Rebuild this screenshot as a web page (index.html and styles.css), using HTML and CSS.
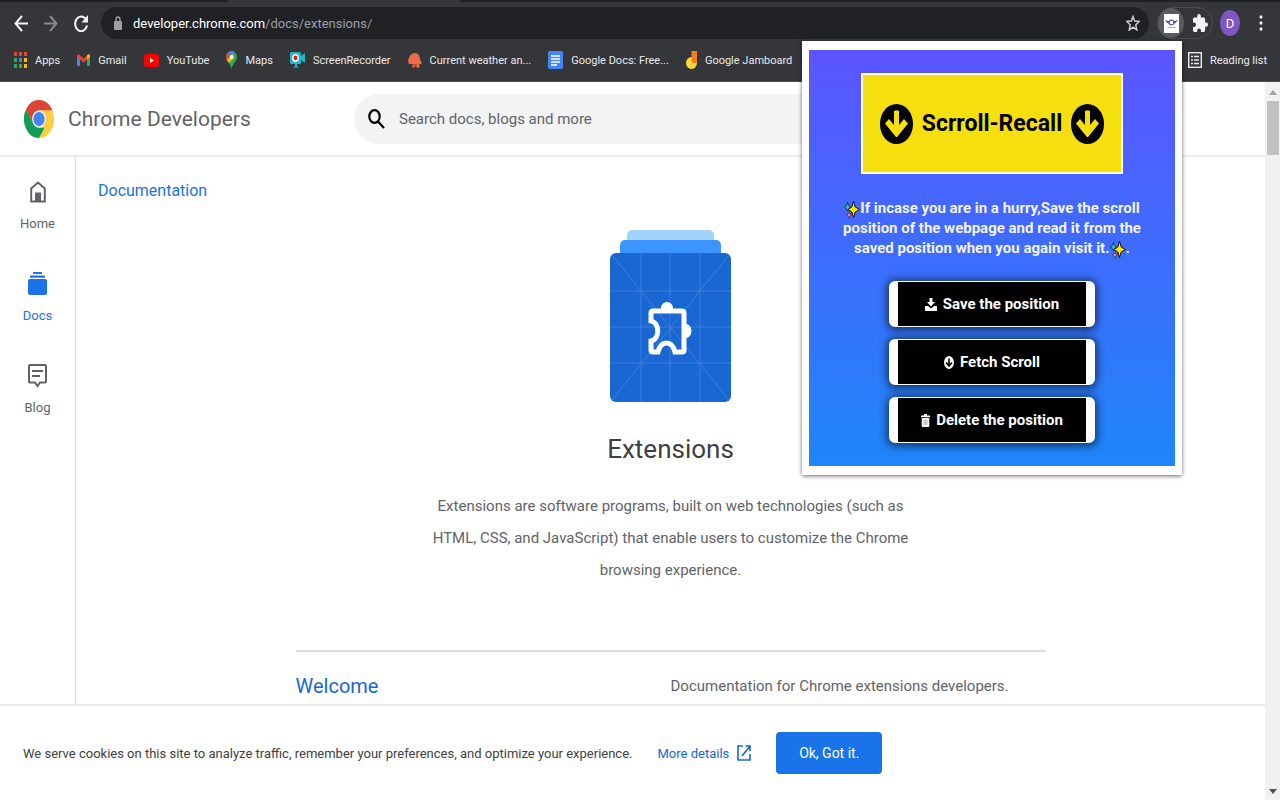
FILE: index.html
```html
<!DOCTYPE html>
<html lang="en">
  <head>
    <meta charset="UTF-8" />
    <meta name="viewport" content="width=device-width, initial-scale=1.0" />
    <title>Extensions - Chrome Developers</title>
    <link rel="stylesheet" href="styles.css">
  </head>
  <body>
    <!-- Browser bar -->
    <div class="browser">
      <div class="tab-strip"><div class="active-tab"></div></div>

      <div class="toolbar">
        <button class="nav-btn" aria-label="Back">
          <svg width="14" height="17" viewBox="0 0 14 17" fill="none" stroke="#f1f3f4" stroke-width="2"><path d="M14 8.500H1.500M8 1 1.500 8.500 8 16" /></svg>
        </button>
        <button class="nav-btn" aria-label="Forward">
          <svg width="14" height="17" viewBox="0 0 14 17" fill="none" stroke="#87898c" stroke-width="2"><path d="M0 8.500H12.500M6 1l6.500 7.500L6 16" /></svg>
        </button>
        <button class="nav-btn" aria-label="Reload">
          <svg width="14" height="17" viewBox="0 0 14 17"><path d="M12 4.500A6 7.300 0 1 0 13 10.500" fill="none" stroke="#f1f3f4" stroke-width="2" /><path d="M14 0v7.500H7.500z" fill="#f1f3f4" /></svg>
        </button>

        <div class="omnibox">
          <svg width="8" height="14" viewBox="0 0 8 14"><path d="M2 6V3.500a2 2.500 0 0 1 4 0V6" fill="none" stroke="#9aa0a6" stroke-width="1.300" /><rect y="5" width="8" height="9" rx="1" fill="#9aa0a6" /></svg>
          <span class="url">developer.chrome.com<span class="url-path">/docs/extensions/</span></span>
          <svg class="star" width="14" height="16" viewBox="0 0 14 16" fill="none" stroke="#d0d2d5" stroke-width="1.400"><path d="M7 1.500 8.600 6l4.600.4-3.500 3.500 1.100 5L7 12.200 3.200 15l1.100-5L.8 6.400 5.400 6z" /></svg>
        </div>

        <div class="extensions-pill">
          <button class="ext-current" aria-label="Scrroll-Recall">
            <svg width="15" height="19" viewBox="0 0 15 19"><path fill="#fff" d="M0 0h15v19H0z" /><path d="M1 6 5.500 7.500 6 10 3.500 9zM14 6 9.500 7.500 9 10l2.500-1z" fill="#4a3f9a" /><circle cx="7.500" cy="8.500" r="2.400" fill="none" stroke="#6254b5" stroke-width="1.200" /><path d="M3.500 13.500h8" stroke="#a9a2d6" /></svg>
          </button>
          <button class="ext-all" aria-label="Extensions">
            <svg width="15" height="18" viewBox="2 1 21 21" preserveAspectRatio="none"><path fill="#f1f3f4" d="M20.500 11H19V7a2 2 0 0 0-2-2h-4V3.500a2.500 2.500 0 0 0-5 0V5H4a2 2 0 0 0-2 2v3.800h1.500a2.700 2.700 0 0 1 0 5.400H2V20a2 2 0 0 0 2 2h3.800v-1.500a2.700 2.700 0 0 1 5.400 0V22H17a2 2 0 0 0 2-2v-4h1.500a2.500 2.500 0 0 0 0-5z" /></svg>
          </button>
        </div>
        <button class="avatar">D</button>
        <button class="menu-btn" aria-label="Menu">
          <svg width="4" height="16" viewBox="0 0 4 16" fill="#f1f3f4"><ellipse cx="2" cy="2" rx="1.500" ry="1.800" /><ellipse cx="2" cy="8" rx="1.500" ry="1.800" /><ellipse cx="2" cy="14" rx="1.500" ry="1.800" /></svg>
        </button>
      </div>

      <nav class="bookmarks">
        <a href="#">
          <svg width="13" height="16" viewBox="0 0 13 16"><path fill="#ea4335" d="M0 0h3v4H0zM5 0h3v4H5zM10 0h3v4h-3z" /><path fill="#34a853" d="M0 6h3v4H0zM0 12h3v4H0zM5 12h3v4H5z" /><path fill="#4285f4" d="M5 6h3v4H5z" /><path fill="#fbbc04" d="M10 6h3v4h-3zM10 12h3v4h-3z" /></svg>
          Apps
        </a>
        <a href="#">
          <svg width="13" height="12" viewBox="0 0 13 12"><path fill="#4285f4" d="M0 2h3v10H1a1 1 0 0 1-1-1z" /><path fill="#34a853" d="M10 2h3v9a1 1 0 0 1-1 1h-2z" /><path fill="#ea4335" d="M0 2Q0 0 2 .4L6.500 4.500 11 .4 10.500 5 6.500 8.700 3 5.500 0 3z" /><path fill="#fbbc04" d="M10 1.300Q13-1 13 2v1l-3 2.800z" /></svg>
          Gmail
        </a>
        <a href="#">
          <svg width="15" height="13" viewBox="0 0 15 13"><rect width="15" height="13" rx="3" fill="#f00" /><path fill="#fff" d="M6 4l4 2.500L6 9z" /></svg>
          YouTube
        </a>
        <a href="#">
          <svg width="11" height="18" viewBox="0 0 11 18"><path fill="#34a853" d="M0 6a5.500 6 0 0 1 11 0C11 10 7 12 5.500 18 4.500 12 0 10 0 6z" /><path fill="#4285f4" d="M2 1.500Q5-1 8.500 1L4 8z" /><path fill="#ea4335" d="M2 1.500 5 5 1 9Q-1 5 2 1.500z" /><path fill="#fbbc04" d="M1 9 7 3l1 4-5 5z" /><ellipse cx="5.500" cy="6" rx="1.800" ry="2.100" fill="#fff" /></svg>
          Maps
        </a>
        <a href="#">
          <svg width="15" height="16" viewBox="0 0 15 16"><rect width="11" height="12" rx="1.500" fill="#1fb6cc" /><path fill="#1fb6cc" d="M11 4l4-3v10l-4-3zM5 12h2v2l2 1.500H3L5 14z" /><ellipse cx="5.500" cy="6" rx="3.400" ry="4" fill="#fff" /><ellipse cx="5.500" cy="6" rx="2" ry="2.400" fill="#e2231a" /></svg>
          ScreenRecorder
        </a>
        <a href="#">
          <svg width="14" height="15" viewBox="0 0 14 15"><path fill="#ee6a47" d="M1 4.500Q3 0 7 0q5 .5 5 6.500l2 3.500-2 1.500-1-1 .5 4L9 15l-1-2-3 2-1-2.500 1-1.500H1L0 8z" /><path fill="#b94a30" d="M5 11h4v2H5z" /></svg>
          Current weather an...
        </a>
        <a href="#">
          <svg width="15" height="18" viewBox="0 0 15 18"><rect width="15" height="18" rx="1.500" fill="#4285f4" /><path d="M3 5h9M3 8h9M3 11h9M3 14h6" stroke="#fff" stroke-width="1.500" /></svg>
          Google Docs: Free...
        </a>
        <a href="#">
          <svg width="11" height="18" viewBox="0 0 11 18"><ellipse cx="5.500" cy="12" rx="5.500" ry="6" fill="#fdd835" /><path fill="#f57f17" d="M5.500 0H11v12H8a2.500 2.500 0 0 1-2.500-2.500z" /></svg>
          Google Jamboard
        </a>
        <a href="#" class="reading-list">
          <svg width="14" height="16" viewBox="0 0 14 16" fill="none" stroke="#e8eaed" stroke-width="1.400"><rect x=".7" y=".7" width="12.600" height="14.600" /><path d="M3 4.500h2M3 8h2M3 11.500h2M6 4.500h5M6 8h5M6 11.500h5" /></svg>
          Reading list
        </a>
      </nav>
    </div>

    <div class="viewport">
      <div class="page">
        <header class="site-header">
          <a href="#" class="brand">
            <svg width="30" height="38" viewBox="0 0 48 48" preserveAspectRatio="none"><circle cx="24" cy="24" r="24" fill="#ffcd40" /><path fill="#0f9d58" d="M3.200 12 14.500 29.500 24 35h9L24 48A24 24 0 0 1 3.200 12z" /><path fill="#db4437" d="M24 24 14.500 29.500 3.200 12A24 24 0 0 1 45.300 13H24z" /><circle cx="24" cy="24" r="11" fill="#f1f1f1" /><circle cx="24" cy="24" r="9" fill="#4285f4" /></svg>
            <span>Chrome Developers</span>
          </a>
          <form class="search">
            <svg width="17" height="20" viewBox="0 0 17 20" fill="none" stroke="#000" stroke-width="2.200"><ellipse cx="6.500" cy="7.500" rx="5.200" ry="6.300" /><path d="M10 12.500 16 19" /></svg>
            <input type="text" aria-label="Search" placeholder="Search docs, blogs and more" />
          </form>
        </header>

        <div class="layout">
          <nav class="side-nav">
            <a href="#">
              <svg width="16" height="24" viewBox="0 0 16 24"><path d="M1.200 21.500V8.500L8 2.500l6.800 6v13z" fill="none" stroke="#5f6368" stroke-width="2" /><path fill="#5f6368" d="M5 12.500h6V22H5z" /></svg>
              Home
            </a>
            <a href="#" class="active">
              <svg width="19" height="24" viewBox="0 0 19 24" fill="#1a73e8"><path d="M5 0h9v2H5zM2 3.500h15v2.300H2z" /><rect y="7" width="19" height="16" rx="2" /></svg>
              Docs
            </a>
            <a href="#">
              <svg width="19" height="24" viewBox="0 0 19 24" fill="none" stroke="#5f6368" stroke-width="2"><path d="M2 1h15q1 0 1 1v15.500q0 1-1 1h-5L9.500 22 7 18.500H2q-1 0-1-1V2q0-1 1-1zM4 7h11M4 12h8" /></svg>
              Blog
            </a>
          </nav>

          <main>
            <a href="#" class="breadcrumb">Documentation</a>
            <section class="hero">
              <svg width="121" height="172" viewBox="0 0 121 172">
                <rect x="17" width="87" height="30" rx="5" fill="#a1d3ff" />
                <rect x="10" y="10" width="101" height="30" rx="5" fill="#3d94ff" />
                <rect y="23" width="121" height="149" rx="6" fill="#1967d2" />
                <path d="M31 23v149M60 23v149M90 23v149M0 61h121M0 97h121M0 133h121M2 25l117 145M119 25 2 170" stroke="#3f7fdb" fill="none" />
                <path d="M43 81h29q2 0 2 2v37q0 2-2 2h-7c-3-12-14-12-17 0h-5q-2 0-2-2v-9c9-2 9-18 0-20v-8q0-2 2-2z" fill="none" stroke="#fff" stroke-width="5" />
                <path fill="#fff" d="M51 80v-2a6 6 0 0 1 12 0v2zM76 94a5.500 7 0 0 1 0 14z" />
              </svg>
              <h1>Extensions</h1>
              <p>Extensions are software programs, built on web technologies (such as HTML, CSS, and JavaScript) that enable users to customize the Chrome browsing experience.</p>
            </section>
            <section class="topic">
              <h2><a href="#">Welcome</a></h2>
              <p>Documentation for Chrome extensions developers.</p>
            </section>
          </main>
        </div>

        <div class="cookie-bar">
          <p>We serve cookies on this site to analyze traffic, remember your preferences, and optimize your experience.</p>
          <a href="#">
            More details
            <svg width="14" height="16" viewBox="0 0 14 16" fill="none" stroke="#1967d2" stroke-width="1.600"><path d="M6 1H1v14h12V9M8.500 1H13v5M13 1 5 11" /></svg>
          </a>
          <button>Ok, Got it.</button>
        </div>
      </div>

      <div class="scrollbar">
        <svg width="8" height="5" viewBox="0 0 8 5"><path fill="#a3a3a3" d="M4 0l4 5H0z" /></svg>
        <div class="thumb"></div>
        <svg class="down" width="8" height="5" viewBox="0 0 8 5"><path fill="#505050" d="M0 0h8L4 5z" /></svg>
      </div>
    </div>

    <!-- Extension popup -->
    <div class="popup">
      <div class="popup-body">
        <div class="popup-title">
          <svg width="33" height="40" viewBox="0 0 33 40"><ellipse cx="16.500" cy="20" rx="16.500" ry="20" /><path d="M14 7.500q0-1 1-1h3q1 0 1 1V21l5-6 4 4.500-10.500 13q-1 1-2 0L5 19.500 9 15l5 6z" fill="#f5df0f" /></svg>
          <h2>Scrroll-Recall</h2>
          <svg width="33" height="40" viewBox="0 0 33 40"><ellipse cx="16.500" cy="20" rx="16.500" ry="20" /><path d="M14 7.500q0-1 1-1h3q1 0 1 1V21l5-6 4 4.500-10.500 13q-1 1-2 0L5 19.500 9 15l5 6z" fill="#f5df0f" /></svg>
        </div>
        <p>
          <svg class="sparkles" viewBox="0 0 16 18" stroke="#111"><path fill="#ffe600" d="M9.500 1 11.200 7 15.500 9.500 11.200 12 9.500 17.500 7.800 12 4 9.500 7.800 7z" /><path fill="#1fc3c9" d="M3.500 2.500 4.700 5.500 6.500 7 4.700 8.500 3.500 11 2.300 8.500.5 7 2.300 5.500z" stroke-width=".7" /><path fill="#f4838f" d="M5 12l1 2 1.500 1L6 16l-1 2-1-2-1.500-1L4 14z" stroke-width=".5" /></svg>If incase you are in a hurry,Save the scroll<br />
          position of the webpage and read it from the<br />
          saved position when you again visit it.<svg class="sparkles" viewBox="0 0 16 18" stroke="#111"><path fill="#ffe600" d="M9.500 1 11.200 7 15.500 9.500 11.200 12 9.500 17.500 7.800 12 4 9.500 7.800 7z" /><path fill="#1fc3c9" d="M3.500 2.500 4.700 5.500 6.500 7 4.700 8.500 3.500 11 2.300 8.500.5 7 2.300 5.500z" stroke-width=".7" /><path fill="#f4838f" d="M5 12l1 2 1.500 1L6 16l-1 2-1-2-1.500-1L4 14z" stroke-width=".5" /></svg>.
        </p>
        <button>
          <svg width="12" height="13" viewBox="0 0 12 13" fill="#fff"><path d="M4.500 0h3v4H10L6 8.500 2 4h2.500z" /><path d="M0 8h3l3 2.500L9 8h3v5H0z" /></svg>
          Save the position
        </button>
        <button>
          <svg width="10" height="13" viewBox="0 0 10 13"><ellipse cx="5" cy="6.500" rx="5" ry="6.500" fill="#fff" /><path d="M5 2.500v7M2 6.500l3 3.500 3-3.500" fill="none" stroke="#000" stroke-width="1.600" /></svg>
          Fetch Scroll
        </button>
        <button>
          <svg width="9" height="13" viewBox="0 0 9 13"><path fill="#fff" d="M0 1.500h3V0h3v1.500h3V3H0zM.7 3.700h7.600V12q0 1-1 1H1.700q-1 0-1-1z" /><path d="M3 5.500v5.500M4.500 5.500v5.500M6 5.500v5.500" stroke="#999" stroke-width=".7" /></svg>
          Delete the position
        </button>
      </div>
    </div>
  </body>
</html>
```
FILE: styles.css
```css
* {
  box-sizing: border-box;
}

body {
  margin: 0;
  height: 100vh;
  display: flex;
  flex-direction: column;
  position: relative;
  overflow: hidden;
  font-family: Roboto, sans-serif;
  color: #5f6368;
  background-color: #ffffff;
}

h1,
h2,
p {
  margin: 0;
  font-weight: 400;
}

a {
  text-decoration: none;
  color: inherit;
}

button {
  padding: 0;
  border: none;
  background: none;
  font-family: inherit;
  cursor: pointer;
}

svg {
  display: block;
  flex-shrink: 0;
}

/* Browser bar */
.browser {
  height: 82px;
  flex-shrink: 0;
  background-color: #35363a;
  border-bottom: 1px solid #4a4b4f;
}

.tab-strip {
  height: 2px;
  background-color: #202124;
  padding-left: 228px;
}

.active-tab {
  width: 232px;
  height: 2px;
  background-color: #35363a;
}

.toolbar {
  display: flex;
  align-items: center;
  height: 42px;
  padding: 0 17px 0 14px;
}

.nav-btn {
  margin-right: 16px;
}

.omnibox {
  flex: 1;
  height: 32px;
  margin-left: -3px;
  padding: 0 9px 0 13px;
  display: flex;
  align-items: center;
  gap: 11px;
  border-radius: 16px;
  background-color: #202124;
}

.url {
  font-size: 13px;
  color: #ffffff;
}

.url-path {
  color: #9aa0a6;
}

.star {
  margin-left: auto;
}

.extensions-pill {
  display: flex;
  align-items: center;
  width: 56px;
  height: 32px;
  margin: 0 7px 0 8px;
  border: 1px solid #4b4c50;
  border-radius: 16px;
}

.ext-current {
  width: 26px;
  height: 30px;
  margin-right: 9px;
  display: flex;
  align-items: center;
  justify-content: center;
  border-radius: 50%;
  background-color: #5a5b5f;
}

.avatar {
  width: 20px;
  height: 26px;
  margin-right: 19px;
  border-radius: 50%;
  background-color: #7e57c2;
  color: #ffffff;
  font-size: 13px;
}

.bookmarks {
  display: flex;
  align-items: center;
  gap: 17px;
  height: 32px;
  padding: 0 13px 0 14px;
  font-size: 11px;
  color: #e8eaed;
  white-space: nowrap;
}

.bookmarks a {
  display: flex;
  align-items: center;
  gap: 8px;
}

.bookmarks .reading-list {
  margin-left: auto;
}

/* Web page */
.viewport {
  flex: 1;
  min-height: 0;
  display: flex;
}

.page {
  flex: 1;
  min-width: 0;
  display: flex;
  flex-direction: column;
}

.site-header {
  display: grid;
  grid-template-columns: 330px minmax(0, 700px);
  align-items: center;
  height: 75px;
  flex-shrink: 0;
  padding-left: 24px;
  border-bottom: 2px solid #e8eaed;
}

.brand {
  display: flex;
  align-items: center;
  gap: 14px;
  font-size: 21px;
}

.search {
  display: flex;
  align-items: center;
  gap: 14px;
  height: 50px;
  padding: 0 14px;
  border-radius: 25px;
  background-color: #f1f3f4;
}

.search input {
  flex: 1;
  min-width: 0;
  padding: 0;
  border: none;
  outline: none;
  background: none;
  font-family: inherit;
  font-size: 15px;
  color: #202124;
}

.search input::placeholder {
  color: #5f6368;
}

.layout {
  flex: 1;
  min-height: 0;
  display: flex;
  overflow: hidden;
}

.side-nav {
  width: 76px;
  flex-shrink: 0;
  display: flex;
  flex-direction: column;
  gap: 38px;
  padding-top: 23px;
  border-right: 1px solid #dadce0;
  font-size: 13px;
  line-height: 20px;
}

.side-nav a {
  display: flex;
  flex-direction: column;
  align-items: center;
  gap: 10px;
}

.side-nav .active,
.breadcrumb {
  color: #1a73e8;
}

main {
  flex: 1;
  min-width: 0;
  padding: 22px 22px 0;
}

.breadcrumb {
  display: block;
  font-size: 16px;
  line-height: 24px;
}

.hero {
  display: flex;
  flex-direction: column;
  align-items: center;
  padding: 27px 0 64px;
}

.hero h1 {
  margin: 26px 0 20px;
  font-size: 26px;
  line-height: 42px;
  color: #3c4043;
}

.hero p {
  max-width: 480px;
  font-size: 15px;
  line-height: 32px;
  text-align: center;
}

.topic {
  display: grid;
  grid-template-columns: 1fr 1fr;
  align-items: center;
  max-width: 750px;
  margin: 0 auto;
  padding-top: 18px;
  border-top: 2px solid #dadce0;
  font-size: 15px;
  line-height: 32px;
}

.topic h2 {
  font-size: 20px;
  color: #1967d2;
}

/* Cookie notice */
.cookie-bar {
  display: flex;
  align-items: center;
  height: 96px;
  flex-shrink: 0;
  padding: 0 23px;
  gap: 25px;
  border-top: 2px solid #e8eaed;
  background-color: #ffffff;
  font-size: 13px;
  white-space: nowrap;
}

.cookie-bar p {
  color: #3c4043;
}

.cookie-bar a {
  display: flex;
  align-items: center;
  gap: 8px;
  color: #1967d2;
}

.cookie-bar button {
  width: 106px;
  height: 42px;
  border-radius: 4px;
  background-color: #1a73e8;
  color: #ffffff;
  font-size: 14px;
}

.scrollbar {
  width: 15px;
  display: flex;
  flex-direction: column;
  align-items: center;
  padding: 8px 0 6px;
  background-color: #f1f1f1;
}

.thumb {
  width: 12px;
  height: 54px;
  margin-top: 6px;
  background-color: #c1c1c1;
}

.down {
  margin-top: auto;
}

/* Extension popup */
.popup {
  position: absolute;
  top: 41px;
  right: 98px;
  width: 380px;
  padding: 9px 7px;
  background-color: #ffffff;
  box-shadow: 0 1px 4px rgba(0, 0, 0, 0.6);
}

.popup-body {
  display: flex;
  flex-direction: column;
  align-items: center;
  padding: 23px 0;
  background: linear-gradient(#5b55ff, #1f85fa);
}

.popup-title {
  display: flex;
  align-items: center;
  justify-content: center;
  gap: 9px;
  width: 262px;
  height: 101px;
  margin-bottom: 24px;
  border: 2px solid #ffffff;
  background-color: #f5df0f;
  color: #000000;
}

.popup-title h2 {
  font-size: 23px;
  font-weight: 700;
}

.popup p {
  margin-bottom: 23px;
  color: #f1f3f4;
  font-size: 15px;
  font-weight: 700;
  line-height: 20px;
  text-align: center;
}

.sparkles {
  display: inline-block;
  width: 16px;
  height: 18px;
  vertical-align: middle;
}

.popup button {
  display: flex;
  align-items: center;
  justify-content: center;
  gap: 6px;
  width: 206px;
  height: 46px;
  border: solid #ffffff;
  border-width: 1px 9px;
  border-radius: 6px;
  background-color: #000000;
  box-shadow: 0 1px 8px 2px rgba(0, 0, 0, 0.6);
  color: #ffffff;
  font-size: 15px;
  font-weight: 700;
}

.popup button + button {
  margin-top: 12px;
}
```
